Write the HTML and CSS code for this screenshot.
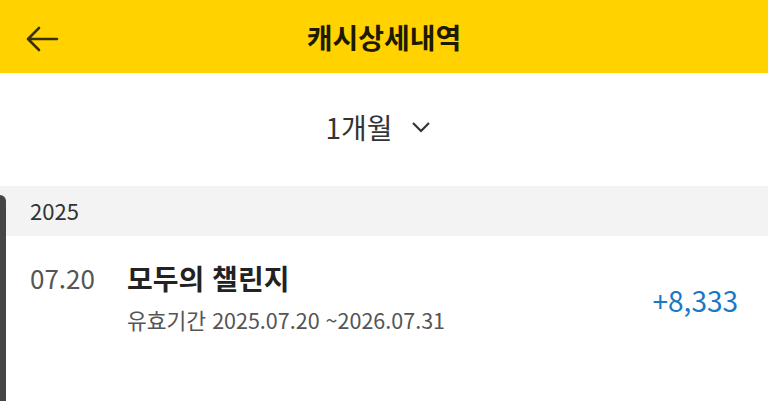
FILE: index.html
```html
<!DOCTYPE html>
<html lang="ko">
  <head>
    <meta charset="utf-8">
    <title>캐시상세내역</title>
    <link rel="stylesheet" href="styles.css">
  </head>
  <body>
    <div class="topbar">
        <span class="back">
            <svg width="34" height="26" viewBox="0 0 34 26">
                <path d="M32 13 H3 M14 2 L3 13 L14 24" fill="none" stroke="#3b3000" stroke-width="2.6" stroke-linecap="round" stroke-linejoin="round"/>
            </svg>
        </span>
        <span class="titre">캐시상세내역</span>
        <span></span>
    </div>

    <div class="periode">
        <span>1개월</span>
        <svg width="20" height="14" viewBox="0 0 20 14">
            <path d="M2 3 L10 11 L18 3" fill="none" stroke="#333" stroke-width="2.2"/>
        </svg>
    </div>

    <div class="annee">2025</div>

    <div class="ligne">
        <div class="date">07.20</div>
        <div class="infos">
            <div class="nom">모두의 챌린지</div>
            <div class="validite">유효기간 2025.07.20 ~2026.07.31</div>
        </div>
        <div class="montant">+8,333</div>
    </div>

    <div class="bord"></div>
</body>
</html>
```

FILE: styles.css
```css
body {
    margin: 0;
    font-family: "Noto Sans CJK KR", "Noto Sans", sans-serif;
    color: #222;
    background-color: white;
    position: relative;
    min-height: 401px;
    overflow: hidden;
}
.topbar {
    height: 73px;
    background-color: #ffd200;
    display: grid;
    grid-template-columns: 1fr auto 1fr;
    align-items: center;
}
.back {
    padding-left: 25px;
    display: flex;
    padding-top: 4px;
}
.titre {
    font-size: 28px;
    font-weight: 700;
    color: #1e1a00;
}
.periode {
    height: 113px;
    display: flex;
    align-items: center;
    justify-content: center;
    gap: 18px;
    font-size: 28px;
    color: #333;
    padding-right: 12px;
    padding-bottom: 6px;
    box-sizing: border-box;
}
.annee {
    height: 50px;
    background-color: #f3f3f3;
    padding-left: 30px;
    padding-bottom: 3px;
    box-sizing: border-box;
    display: flex;
    align-items: center;
    font-size: 22px;
    color: #333;
}
.ligne {
    display: grid;
    grid-template-columns: 97px 1fr auto;
    padding: 24px 30px 0 30px;
}
.date {
    font-size: 26px;
    line-height: 36px;
    color: #555;
}
.nom {
    font-size: 28px;
    font-weight: 700;
    line-height: 36px;
    color: #222;
}
.validite {
    margin-top: 10px;
    font-size: 21.5px;
    line-height: 28px;
    color: #555;
}
.montant {
    align-self: center;
    margin-top: 6px;
    font-size: 28px;
    color: #1a78c4;
}
.bord {
    position: absolute;
    left: 0;
    top: 195px;
    width: 6px;
    height: 220px;
    background-color: #454545;
    border-top-right-radius: 6px;
}
```
